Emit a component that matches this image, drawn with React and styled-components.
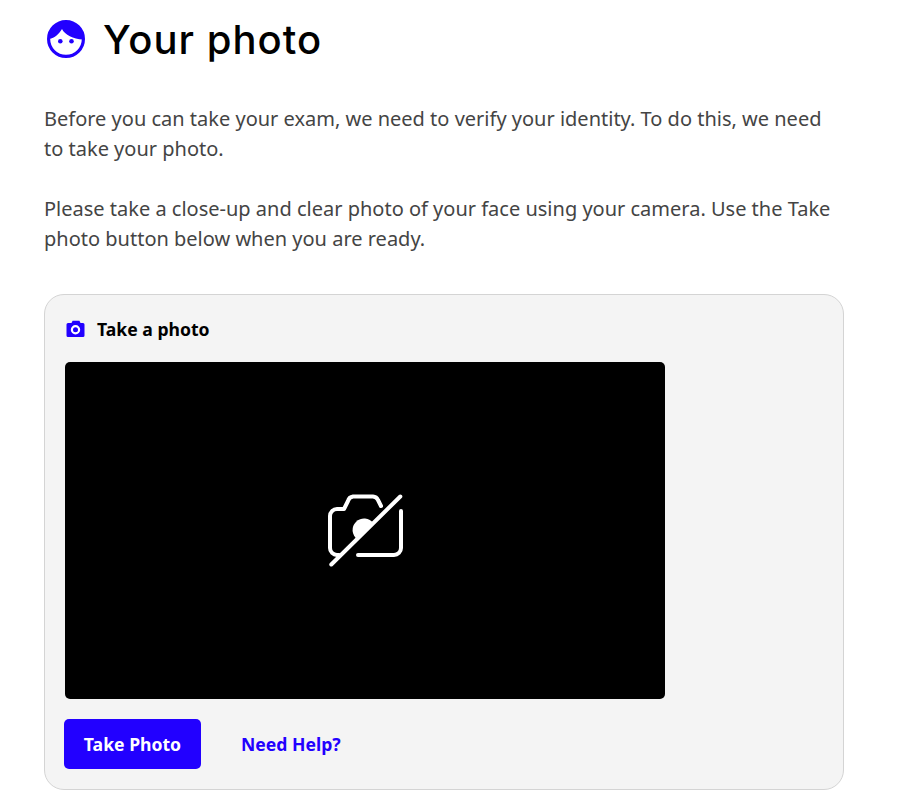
import React from "react";
import styled, { createGlobalStyle } from "styled-components";

const GlobalStyle = createGlobalStyle`
    html, body {
        margin: 0;
        padding: 0;
        background: white;
        overflow: hidden;
    }
    body {
        font-family: "Noto Sans", "Open Sans", sans-serif;
    }
`;

const Page = styled.div`
    width: 899px;
    height: 790px;
    padding: 0 0 0 44px;
    box-sizing: border-box;
`;

const Header = styled.div`
    display: flex;
    align-items: center;
    gap: 18px;
    height: 78px;
    padding-left: 3px;
`;

const FaceIcon = styled.svg`
    width: 38px;
    height: 38px;
    flex: none;
`;

const Title = styled.h1`
    margin: 0;
    font-family: "Inter", sans-serif;
    font-size: 40px;
    font-weight: 450;
    letter-spacing: 1px;
    color: #000;
`;

const Intro = styled.p`
    margin: 26px 0 30px;
    width: 800px;
    font-size: 20px;
    line-height: 30px;
    color: #444;
`;

const Card = styled.section`
    box-sizing: border-box;
    width: 800px;
    height: 496px;
    margin-top: 40px;
    padding: 20px;
    background: #f4f4f4;
    border: 1px solid #d4d4d4;
    border-radius: 20px;
`;

const CardHeader = styled.div`
    display: flex;
    align-items: center;
    gap: 12px;
    height: 27px;
    font-size: 17.6px;
    font-weight: 700;
    color: #000;
`;

const Preview = styled.div`
    display: flex;
    align-items: center;
    justify-content: center;
    width: 600px;
    height: 337px;
    margin-top: 20px;
    background: #000;
    border-radius: 5px;
`;

const Actions = styled.div`
    display: flex;
    align-items: center;
    gap: 40px;
    margin-top: 20px;
    margin-left: -1px;
`;

const TakePhotoButton = styled.button`
    width: 137px;
    height: 50px;
    border: none;
    border-radius: 5px;
    background: #2200ff;
    color: #fff;
    font-family: inherit;
    font-size: 17.6px;
    font-weight: 700;
    cursor: pointer;
`;

const HelpLink = styled.a`
    color: #2200ff;
    font-size: 17.6px;
    font-weight: 700;
    text-decoration: none;
`;

const Face = () => (
    <FaceIcon viewBox="0 0 38 38">
        <circle cx="19" cy="19" r="17.4" fill="#fff" stroke="#2200ff" strokeWidth="3.2" />
        <path d="M2 19 C8 18 12 14 15 9 C18 15 26 19 36 19.5 C36 8 28 1 19 1 C9 1 2 8 2 19 Z" fill="#2200ff" />
        <circle cx="13.3" cy="21.3" r="2.3" fill="#2200ff" />
        <circle cx="24.5" cy="21.3" r="2.3" fill="#2200ff" />
    </FaceIcon>
);

const CameraSmall = () => (
    <svg width="20" height="18" viewBox="0 0 20 18">
        <path d="M3 3 H6.5 L7.6 0.8 H14.4 L15.5 3 H18 A1.5 1.5 0 0 1 19.5 4.5 V15.5 A1.5 1.5 0 0 1 18 17 H3 A1.5 1.5 0 0 1 1.5 15.5 V4.5 A1.5 1.5 0 0 1 3 3 Z" fill="#2200ff" />
        <circle cx="10.5" cy="9.8" r="3.6" fill="none" stroke="#fff" strokeWidth="2.2" />
    </svg>
);

const CameraOff = () => (
    <svg width="78" height="76" viewBox="0 0 78 76" fill="none" stroke="#fff" strokeWidth="4" strokeLinecap="round" strokeLinejoin="round">
        <path d="M13 62 H11 A7 7 0 0 1 4 55 V23 A7 7 0 0 1 11 16 H18 L22 8 A6 6 0 0 1 27 3.5 H47 A6 6 0 0 1 52 7 L55 13" />
        <path d="M75 18 V55 A7 7 0 0 1 68 62 H32" />
        <line x1="5.3" y1="71.5" x2="74.3" y2="3.5" />
        <path d="M47.5 30.5 A11.5 11.5 0 1 0 31.5 46.5 Z" fill="#fff" stroke="none" />
    </svg>
);

const App = () => (
    <Page>
        <GlobalStyle />
        <Header>
            <Face />
            <Title>Your photo</Title>
        </Header>
        <Intro>
            Before you can take your exam, we need to verify your identity. To do this, we need to take your photo.
        </Intro>
        <Intro>
            Please take a close-up and clear photo of your face using your camera. Use the Take photo button below when you are ready.
        </Intro>
        <Card>
            <CardHeader>
                <CameraSmall />
                Take a photo
            </CardHeader>
            <Preview>
                <CameraOff />
            </Preview>
            <Actions>
                <TakePhotoButton>Take Photo</TakePhotoButton>
                <HelpLink href="#">Need Help?</HelpLink>
            </Actions>
        </Card>
    </Page>
);

export default App;
